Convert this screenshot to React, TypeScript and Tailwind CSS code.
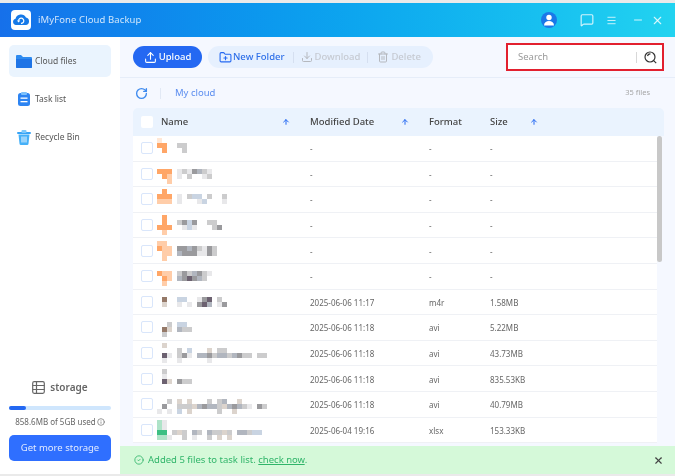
import React from "react";
import { Upload, FolderPlus, Download, Trash2, RotateCw, Menu, Minus, X, CircleCheck, Info, ArrowUp, MessageSquare } from "lucide-react";

const colours: Record<string, string> = {
  o: "#ff9c57", p: "#ffc8a0", q: "#ffe6d3",
  g: "#c6c6c8", d: "#8f8f92", l: "#e6e6e8", b: "#c3cfdf", e: "#a8aeb8",
  k: "#5c5060", n: "#8a6a58", t: "#d8cfc8",
  G: "#27b876", m: "#a5e0c2",
};

function Mosaic({ lines }: { lines: string[] }) {
  return (
    <svg width="150" height="20" viewBox="0 0 150 20" className="shrink-0">
      {lines.flatMap((line, y) =>
        line.split("").map((c, x) =>
          colours[c] ? <rect key={`${x}-${y}`} x={x * 5} y={y * 5} width="5" height="5" fill={colours[c]} opacity="0.9" /> : null
        )
      )}
    </svg>
  );
}

const rows: { name: string[]; date: string; format: string; size: string }[] = [
  { name: ["q", "oo..gg", ".o...g", ".."], date: "-", format: "-", size: "-" },
  { name: ["", "ooo.lgldegl", ".op.l.g..lg", "..p"], date: "-", format: "-", size: "-" },
  { name: [".o", "ooo.l.gbb.g..g", "ppp.l...lb...l", ""], date: "-", format: "-", size: "-" },
  { name: [".o", ".o..gdbd..gg", "ooo..lbl...gd", ".p"], date: "-", format: "-", size: "-" },
  { name: ["pp", "opp.ddedgldg", ".pp.edddlldg", ".p"], date: "-", format: "-", size: "-" },
  { name: ["", "opp.gdgedgl", ".op.edkdeg..", ".p"], date: "-", format: "-", size: "-" },
  { name: ["", ".n..bb..ldk.g", ".t..l.l.dke.ld", ""], date: "2025-06-06 11:17", format: "m4r", size: "1.58MB" },
  { name: ["", "..g.bb", ".nt.egg", ".g"], date: "2025-06-06 11:18", format: "avi", size: "5.22MB" },
  { name: [".t", "....g.b...t.gg", ".kl.gdl.eedgeegedgg.gg", ".l..l.....l.."], date: "2025-06-06 11:18", format: "avi", size: "43.73MB" },
  { name: [".g", ".l", ".kt.dgg", ".."], date: "2025-06-06 11:18", format: "avi", size: "835.53KB" },
  { name: ["", "..g.t.t...g.ge..t", ".d..gggtedeegtedegl.dg", "l.l.b.t.....g..t"], date: "2025-06-06 11:18", format: "avi", size: "40.79MB" },
  { name: ["ml", "ml", "GG.gtg.eg.eggtg.eegbb", "mml..g.l..g.t.t"], date: "2025-06-04 19:16", format: "xlsx", size: "153.33KB" },
];

function Checkbox() {
  return <span className="w-[12px] h-[12px] shrink-0 rounded-[2px] border border-[#d9e6fb] bg-white" />;
}

function UpArrow() {
  return <ArrowUp size={8} strokeWidth={3} className="text-[#2468f2]" />;
}

function Logo() {
  return (
    <svg width="20" height="20" viewBox="0 0 20 20" className="shrink-0">
      <rect width="20" height="20" rx="4" fill="#ffffff" />
      <path d="M5 15a3.2 3.2 0 0 1-.5-6.3A5.6 5.6 0 0 1 15 7.6a3.8 3.8 0 0 1 .2 7.4Z" fill="#1679e8" />
      <path d="M7.6 10.8a2.6 2.6 0 1 1 2.4 2.6" fill="none" stroke="#ffffff" strokeWidth="1.2" />
      <path d="M5.9 10.4h3.4l-1.7 2Z" fill="#ffffff" />
    </svg>
  );
}

function FolderIcon() {
  return (
    <svg width="16" height="14" viewBox="0 0 16 14" className="shrink-0">
      <path d="M0 2a1 1 0 0 1 1-1h4l2 2h8a1 1 0 0 1 1 1v9a1 1 0 0 1-1 1H1a1 1 0 0 1-1-1Z" fill="#2e8bf0" />
      <path d="M0 5h16v8a1 1 0 0 1-1 1H1a1 1 0 0 1-1-1Z" fill="#1e74e6" />
    </svg>
  );
}

function TaskIcon() {
  return (
    <svg width="12" height="14" viewBox="0 0 12 14" className="shrink-0">
      <rect y="1" width="12" height="13" rx="2.5" fill="#2d84f2" />
      <rect x="3" width="6" height="3" rx="1" fill="#7cc0fb" />
      <rect x="2.5" y="5.5" width="7" height="1.3" fill="#ffffff" />
      <rect x="2.5" y="9" width="7" height="1.3" fill="#ffffff" />
    </svg>
  );
}

function BinIcon() {
  return (
    <svg width="14" height="15" viewBox="0 0 14 15" className="shrink-0">
      <rect y="2" width="14" height="2" rx="1" fill="#38a4f6" />
      <rect x="4.5" width="5" height="3" rx="1" fill="#7cc8fb" />
      <path d="M1.5 4.5h11l-1 9.2a1.4 1.4 0 0 1-1.4 1.3H3.9a1.4 1.4 0 0 1-1.4-1.3Z" fill="#45b0f8" />
      <path d="M5 6.500v6M7 6.500v6M9 6.500v6" stroke="#ffffff" strokeWidth="0.9" />
    </svg>
  );
}

function StorageIcon() {
  return (
    <svg width="13" height="13" viewBox="0 0 13 13" fill="none" stroke="#666666" strokeWidth="1.2" className="shrink-0">
      <rect x="0.7" y="0.7" width="11.6" height="11.6" rx="1.5" />
      <path d="M0.7 4.5h11.6M0.7 8.5h11.6M4.5 0.7v11.6" />
    </svg>
  );
}

function SearchIcon() {
  return (
    <svg width="13" height="13" viewBox="0 0 13 13" fill="none" stroke="#333333" strokeWidth="1.2" className="shrink-0">
      <circle cx="6" cy="6" r="5" />
      <path d="M3.5 5a2.8 2.8 0 0 1 3-2M9.700 9.700l2.500 2.500" />
    </svg>
  );
}

function UserIcon() {
  return (
    <span className="w-[16px] h-[16px] rounded-full bg-[#1a78e8] flex items-center justify-center">
      <svg width="12" height="12" viewBox="0 0 12 12" fill="#ffffff">
        <circle cx="6" cy="3.5" r="2.7" />
        <path d="M1 11.500c0-3 2.200-4.500 5-4.500s5 1.500 5 4.500Z" />
      </svg>
    </span>
  );
}

export default function App() {
  return (
    <div className="w-[675px] h-[476px] overflow-hidden flex flex-col bg-[#eaeaea] pt-[3px] pb-[2px] blur-[0.3px] font-['Noto_Sans',sans-serif]">
      <header className="h-[34px] shrink-0 flex items-center pl-[11px] pr-[11px] bg-gradient-to-r from-[#1670ea] to-[#22d3f0]">
        <Logo />
        <span className="ml-[7px] text-[9.500px] text-white/80 tracking-[0.1px]">iMyFone Cloud Backup</span>
        <div className="ml-auto flex items-center">
          <UserIcon />
          <MessageSquare size={14} className="ml-[23px] text-white/80" />
          <Menu size={11} className="ml-[12px] text-white/80" />
          <Minus size={12} className="ml-[15px] text-white/80" />
          <X size={13} className="ml-[7px] text-white/80" />
        </div>
      </header>

      <div className="flex-1 flex min-h-0">
        <aside className="w-[120px] shrink-0 bg-white flex flex-col px-[9px] pt-[8px] pb-[13px] text-[#555555]">
          <div className="h-[32px] rounded-[5px] bg-[#eaf4fe] flex items-center pl-[7px] gap-[3px] text-[8.500px]">
            <span className="w-[16px] flex justify-center"><FolderIcon /></span>
            <span className="pt-[1px]">Cloud files</span>
          </div>
          <div className="mt-[6px] h-[32px] flex items-center pl-[7px] gap-[3px] text-[8.500px]">
            <span className="w-[16px] flex justify-center"><TaskIcon /></span>
            <span className="pt-[1px]">Task list</span>
          </div>
          <div className="mt-[6px] h-[32px] flex items-center pl-[7px] gap-[3px] text-[8.500px]">
            <span className="w-[16px] flex justify-center"><BinIcon /></span>
            <span className="pt-[1px]">Recycle Bin</span>
          </div>
          <div className="mt-auto flex items-center justify-center gap-[5px] text-[10px] font-semibold text-[#666666]">
            <StorageIcon />
            <span className="pt-[1px]">storage</span>
          </div>
          <div className="mt-[11px] h-[4px] rounded-full bg-[#cfe6fd]">
            <div className="h-full w-[17px] rounded-full bg-[#2468f2]" />
          </div>
          <div className="mt-[6px] flex items-center justify-center gap-[1px] text-[8px] text-[#666666]">
            <span>858.6MB of 5GB used</span>
            <Info size={8} />
          </div>
          <button className="mt-[7px] h-[26px] rounded-[5px] bg-[#2f6fff] text-white/85 text-[9.500px]">Get more storage</button>
        </aside>

        <main className="flex-1 min-w-0 bg-[#f5f8ff] flex flex-col">
          <div className="h-[41px] shrink-0 flex items-center pl-[13px] pr-[11px] border-b border-[#e6edf9]">
            <button className="w-[69px] h-[22px] rounded-full bg-[#2468f2] text-white text-[9.500px] font-medium flex items-center justify-center gap-[2px]">
              <Upload size={13} />
              Upload
            </button>
            <div className="ml-[6px] w-[225px] h-[22px] rounded-full bg-[#e6f0fe] flex items-center pl-[11px] text-[9.500px] font-medium">
              <FolderPlus size={13} className="text-[#2468f2]" />
              <span className="ml-[1px] text-[#2e6fe8]">New Folder</span>
              <span className="ml-[8px] w-px h-[11px] bg-[#d5dff0]" />
              <Download size={12} className="ml-[7px] text-[#b5b8be]" />
              <span className="ml-[2px] text-[#c6cad2]">Download</span>
              <span className="ml-[7px] w-px h-[11px] bg-[#d5dff0]" />
              <Trash2 size={12} className="ml-[9px] text-[#b5b8be]" />
              <span className="ml-[2px] text-[#c6cad2]">Delete</span>
            </div>
            <div className="ml-auto w-[158px] h-[28px] border-2 border-[#e2202f] bg-white flex items-center pl-[10px] pr-[5px]">
              <span className="text-[9.500px] text-[#9a9a9a]">Search</span>
              <span className="ml-auto w-px h-[11px] bg-[#d8d8d8]" />
              <span className="ml-[7px]"><SearchIcon /></span>
            </div>
          </div>

          <div className="h-[30px] shrink-0 flex items-center pl-[15px] pr-[25px]">
            <RotateCw size={13} strokeWidth={2.5} className="text-[#3f8bef]" />
            <span className="ml-[12px] w-px h-[11px] bg-[#e2e9f5]" />
            <span className="ml-[14px] text-[9.500px] text-[#5b8def]">My cloud</span>
            <span className="ml-auto text-[7.500px] text-[#a6a6a6]">35 files</span>
          </div>

          <div className="flex-1 min-h-0 ml-[13px] mr-[11px] flex flex-col overflow-hidden">
            <div className="h-[28px] shrink-0 rounded-t-[5px] bg-[#eaf3fe] flex items-center text-[9.500px] font-medium text-[#444444]">
              <span className="ml-[8px] w-[12px] h-[12px] rounded-[2px] bg-white" />
              <span className="ml-[8px] w-[121px] pt-[1px]">Name</span>
              <span className="w-[28px]"><UpArrow /></span>
              <span className="w-[91px] pt-[1px]">Modified Date</span>
              <span className="w-[28px]"><UpArrow /></span>
              <span className="w-[61px] pt-[1px]">Format</span>
              <span className="w-[40px] pt-[1px]">Size</span>
              <UpArrow />
            </div>
            <div className="flex-1 min-h-0 relative pr-[7px]">
              {rows.map((r, i) => (
                <div key={i} className="h-[25.600px] flex items-center bg-white border-b border-[#eff1f5] text-[8px] text-[#666666]">
                  <span className="ml-[8px] flex"><Checkbox /></span>
                  <span className="ml-[4px] w-[153px] flex items-center overflow-hidden"><Mosaic lines={r.name} /></span>
                  <span className="w-[119px] pt-[2px]">{r.date}</span>
                  <span className="w-[61px] pt-[2px]">{r.format}</span>
                  <span className="pt-[2px]">{r.size}</span>
                </div>
              ))}
              <div className="absolute right-[2px] top-0 w-[5px] h-[126px] rounded-full bg-[#c8c8c8]" />
            </div>
          </div>

          <div className="h-[28px] shrink-0 bg-[#d5f9d9] flex items-center pl-[14px] pr-[11px] text-[#30b56a] text-[9.500px]">
            <CircleCheck size={10} />
            <span className="ml-[4px]">Added 5 files to task list. <span className="underline">check now</span>.</span>
            <X size={11} strokeWidth={2.5} className="ml-auto text-[#444444]" />
          </div>
        </main>
      </div>
    </div>
  );
}
